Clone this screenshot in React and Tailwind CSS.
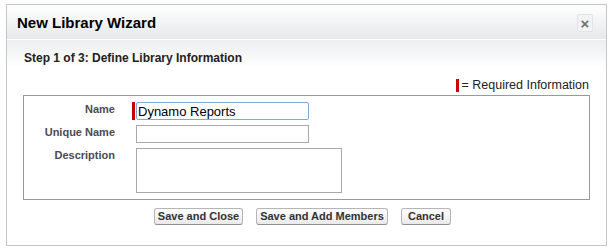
import React from "react";

const font = { fontFamily: '"Liberation Sans", Arial, sans-serif' };

function Btn({ children, w }) {
  return (
    <button
      className={`h-[17px] ${w} rounded-[3px] border border-[#b5b5b5] border-b-[#8e8e8e] bg-gradient-to-b from-white to-[#e9e9e9] text-[11px] font-bold text-[#333] leading-none`}
    >
      {children}
    </button>
  );
}

export default function App() {
  return (
    <div className="w-[613px] h-[248px] bg-white overflow-hidden" style={font}>
      <div className="ml-[6px] mt-[4px] w-[601px] h-[242px] border border-[#c6c6c6] bg-white flex flex-col">
        {/* header */}
        <div className="h-[35px] flex-shrink-0 flex items-center justify-between pl-[10px] pr-[13px] bg-gradient-to-b from-white to-[#e6e8e9] border-b border-white">
          <h1 className="text-[15px] font-bold text-black leading-none">New Library Wizard</h1>
          <button className="mt-[2px] w-[16px] h-[18px] rounded-[2px] bg-[#f2f3f4] border border-[#e2e4e5] flex items-center justify-center text-[#6f6f6f] text-[15px] font-bold leading-none">
            ×
          </button>
        </div>

        {/* step band */}
        <div className="h-[28px] flex-shrink-0 bg-gradient-to-b from-[#eceeef] to-white pl-[17px] pt-[11px]">
          <h2 className="text-[12px] font-bold text-[#222] leading-[15px]">
            Step 1 of 3: Define Library Information
          </h2>
        </div>

        {/* required legend */}
        <div className="flex justify-end items-center pr-[17px] pt-[8px] h-[27px] flex-shrink-0">
          <span className="w-[3px] h-[13px] bg-[#c00] mr-[2px]" />
          <span className="text-[12.5px] text-[#222] leading-none">= Required Information</span>
        </div>

        {/* fieldset */}
        <div className="mx-[16px] h-[105px] flex-shrink-0 border border-[#999] pt-[6px]">
          <div className="grid grid-cols-[91px_1fr] gap-x-[17px] gap-y-[5px] items-start">
            <label className="text-right text-[11px] font-bold text-[#4a4a56] pt-[1px] leading-[13px]">Name</label>
            <div className="flex">
              <span className="w-[3px] h-[18px] bg-[#c00] mr-px" />
              <input
                defaultValue="Dynamo Reports"
                className="w-[173px] h-[18px] border border-[#7fa7e3] rounded-[2px] px-px text-[13px] text-black leading-none outline-none"
              />
            </div>

            <label className="text-right text-[11px] font-bold text-[#4a4a56] pt-[1px] leading-[13px]">Unique Name</label>
            <input className="ml-[4px] w-[173px] h-[18px] border border-[#a9a9a9] outline-none" />

            <label className="text-right text-[11px] font-bold text-[#4a4a56] pt-px leading-[13px]">Description</label>
            <textarea className="ml-[4px] w-[206px] h-[45px] border border-[#a9a9a9] resize-none outline-none" />
          </div>
        </div>

        {/* buttons */}
        <div className="flex items-center gap-[13px] pl-[147px] pt-[8px]">
          <Btn w="w-[89px]">Save and Close</Btn>
          <Btn w="w-[132px]">Save and Add Members</Btn>
          <Btn w="w-[50px]">Cancel</Btn>
        </div>
      </div>
    </div>
  );
}
